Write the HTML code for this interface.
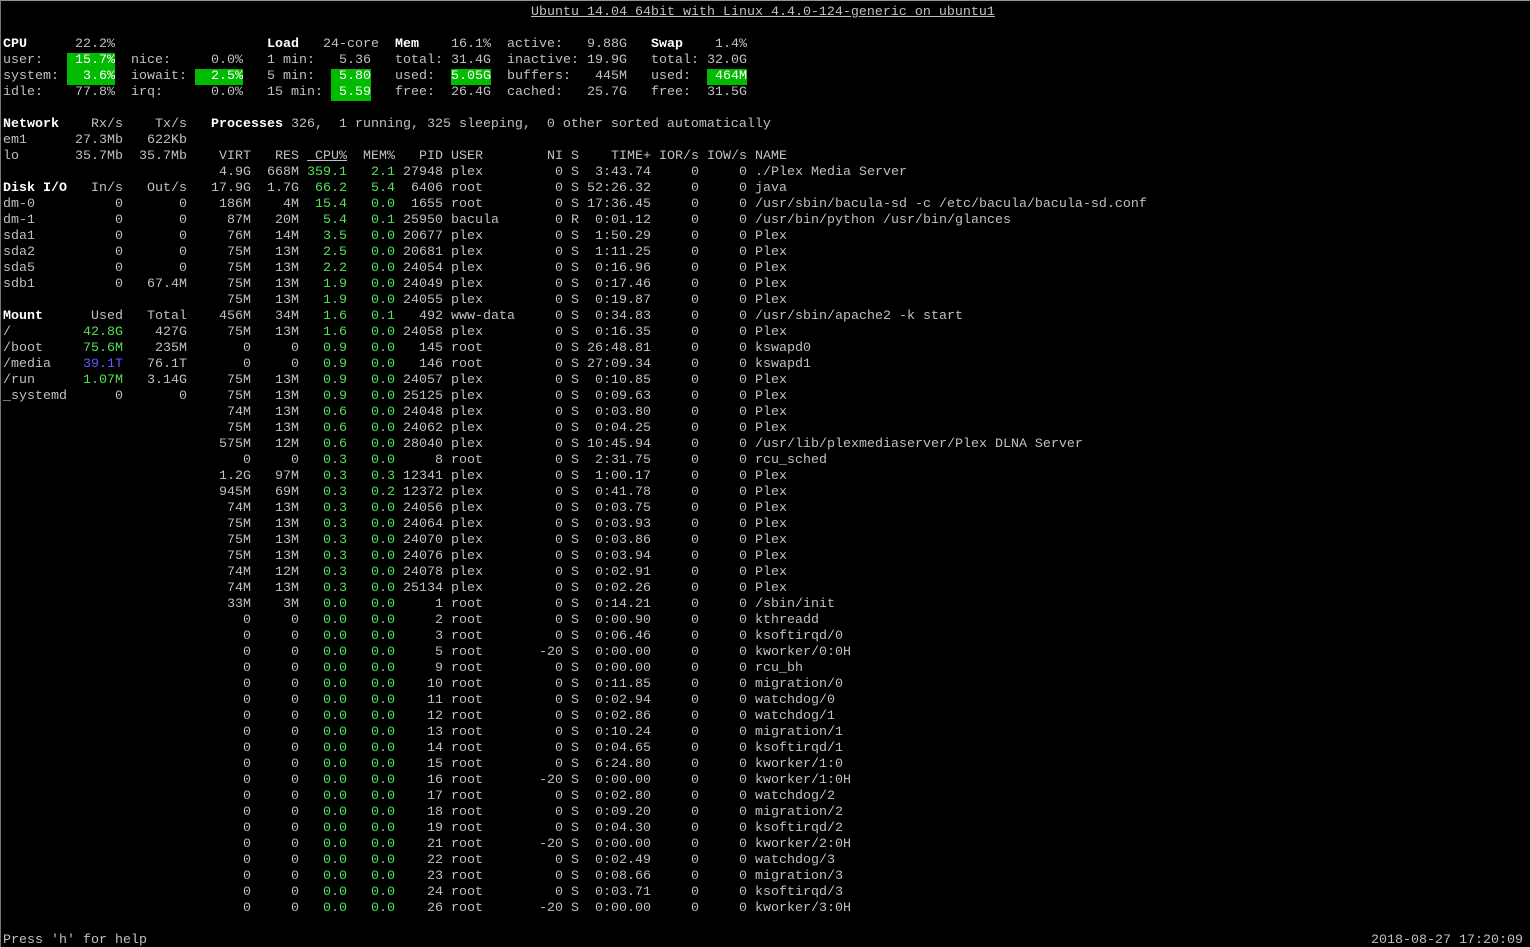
<!DOCTYPE html>
<html><head><meta charset="utf-8"><style>
html,body{margin:0;padding:0;background:#000;width:1530px;height:947px;overflow:hidden;}
body{position:relative;border-top:1px solid #8a93a3;border-left:1px solid #777;box-sizing:border-box;}
#t{position:absolute;left:2px;top:4px;width:1520px;height:940px;font-family:"Liberation Mono",monospace;font-size:13.333px;line-height:16px;color:#c0c0c0;white-space:nowrap;}
#t span{white-space:pre;}
.a{position:absolute;}
.b{color:#fff;font-weight:bold;}
.h{background:#00bb00;color:#fff;}
.g{color:#55e055;}
.u{color:#5c5cff;}
.ul{text-decoration:underline;}
.row{position:absolute;left:208px;height:16px;}
.row span{display:inline-block;vertical-align:top;}
.v1{width:40px;text-align:right}
.v2,.v3,.v4,.v5,.v11,.v12{width:48px;text-align:right}
.v3,.v4{color:#55e055}
.v6{width:88px;margin-left:8px;text-align:left}
.v7{width:24px;text-align:right}
.v8{width:8px;margin-left:8px}
.v9{width:72px;text-align:right}
.v13{margin-left:8px}
.lrow{position:absolute;left:0;height:16px;}
.lrow span{display:inline-block;vertical-align:top;}
.l1{width:72px}
.l2{width:48px;text-align:right}
.l3{width:64px;text-align:right}
</style></head><body><div id="t"><span class="a ul" style="left:528px;top:0">Ubuntu 14.04 64bit with Linux 4.4.0-124-generic on ubuntu1</span><span class="a b" style="left:0;top:32px">CPU</span><span class="a" style="left:72px;top:32px">22.2%</span><span class="a b" style="left:264px;top:32px">Load</span><span class="a" style="left:320px;top:32px">24-core</span><span class="a b" style="left:392px;top:32px">Mem</span><span class="a" style="left:448px;top:32px">16.1%</span><span class="a" style="left:504px;top:32px">active:</span><span class="a" style="left:584px;top:32px">9.88G</span><span class="a b" style="left:648px;top:32px">Swap</span><span class="a" style="left:712px;top:32px">1.4%</span>
<span class="a" style="left:0;top:48px">user:</span><span class="a h" style="left:64px;top:48px"> 15.7%</span><span class="a" style="left:128px;top:48px">nice:</span><span class="a" style="left:208px;top:48px">0.0%</span><span class="a" style="left:264px;top:48px">1 min:</span><span class="a" style="left:336px;top:48px">5.36</span><span class="a" style="left:392px;top:48px">total:</span><span class="a" style="left:448px;top:48px">31.4G</span><span class="a" style="left:504px;top:48px">inactive:</span><span class="a" style="left:584px;top:48px">19.9G</span><span class="a" style="left:648px;top:48px">total:</span><span class="a" style="left:704px;top:48px">32.0G</span>
<span class="a" style="left:0;top:64px">system:</span><span class="a h" style="left:64px;top:64px">  3.6%</span><span class="a" style="left:128px;top:64px">iowait:</span><span class="a h" style="left:192px;top:64px">  2.5%</span><span class="a" style="left:264px;top:64px">5 min:</span><span class="a h" style="left:328px;top:64px"> 5.80</span><span class="a" style="left:392px;top:64px">used:</span><span class="a h" style="left:448px;top:64px">5.05G</span><span class="a" style="left:504px;top:64px">buffers:</span><span class="a" style="left:592px;top:64px">445M</span><span class="a" style="left:648px;top:64px">used:</span><span class="a h" style="left:704px;top:64px"> 464M</span>
<span class="a" style="left:0;top:80px">idle:</span><span class="a" style="left:72px;top:80px">77.8%</span><span class="a" style="left:128px;top:80px">irq:</span><span class="a" style="left:208px;top:80px">0.0%</span><span class="a" style="left:264px;top:80px">15 min:</span><span class="a h" style="left:328px;top:80px"> 5.59</span><span class="a" style="left:392px;top:80px">free:</span><span class="a" style="left:448px;top:80px">26.4G</span><span class="a" style="left:504px;top:80px">cached:</span><span class="a" style="left:584px;top:80px">25.7G</span><span class="a" style="left:648px;top:80px">free:</span><span class="a" style="left:704px;top:80px">31.5G</span>
<span class="lrow" style="top:112px"><span class="l1 b">Network</span><span class="l2">Rx/s</span><span class="l3">Tx/s</span></span><span class="a" style="left:208px;top:112px"><span class="b">Processes</span> 326,  1 running, 325 sleeping,  0 other sorted automatically</span>
<span class="lrow" style="top:128px"><span class="l1">em1</span><span class="l2">27.3Mb</span><span class="l3">622Kb</span></span>
<span class="lrow" style="top:144px"><span class="l1">lo</span><span class="l2">35.7Mb</span><span class="l3">35.7Mb</span></span>
<span class="lrow" style="top:176px"><span class="l1 b">Disk I/O</span><span class="l2">In/s</span><span class="l3">Out/s</span></span>
<span class="lrow" style="top:192px"><span class="l1">dm-0</span><span class="l2">0</span><span class="l3">0</span></span>
<span class="lrow" style="top:208px"><span class="l1">dm-1</span><span class="l2">0</span><span class="l3">0</span></span>
<span class="lrow" style="top:224px"><span class="l1">sda1</span><span class="l2">0</span><span class="l3">0</span></span>
<span class="lrow" style="top:240px"><span class="l1">sda2</span><span class="l2">0</span><span class="l3">0</span></span>
<span class="lrow" style="top:256px"><span class="l1">sda5</span><span class="l2">0</span><span class="l3">0</span></span>
<span class="lrow" style="top:272px"><span class="l1">sdb1</span><span class="l2">0</span><span class="l3">67.4M</span></span>
<span class="lrow" style="top:304px"><span class="l1 b">Mount</span><span class="l2">Used</span><span class="l3">Total</span></span>
<span class="lrow" style="top:320px"><span class="l1">/</span><span class="l2 g">42.8G</span><span class="l3">427G</span></span>
<span class="lrow" style="top:336px"><span class="l1">/boot</span><span class="l2 g">75.6M</span><span class="l3">235M</span></span>
<span class="lrow" style="top:352px"><span class="l1">/media</span><span class="l2 u">39.1T</span><span class="l3">76.1T</span></span>
<span class="lrow" style="top:368px"><span class="l1">/run</span><span class="l2 g">1.07M</span><span class="l3">3.14G</span></span>
<span class="lrow" style="top:384px"><span class="l1">_systemd</span><span class="l2">0</span><span class="l3">0</span></span>
<span class="row" style="top:144px"><span class="v1">VIRT</span><span class="v2">RES</span><span class="v2"><span class="ul"> CPU%</span></span><span class="v2">MEM%</span><span class="v5">PID</span><span class="v6">USER</span><span class="v7">NI</span><span class="v8">S</span><span class="v9">TIME+</span><span class="v11">IOR/s</span><span class="v12">IOW/s</span><span class="v13">NAME</span></span>
<span class="row" style="top:160px"><span class="v1">4.9G</span><span class="v2">668M</span><span class="v3">359.1</span><span class="v4">2.1</span><span class="v5">27948</span><span class="v6">plex</span><span class="v7">0</span><span class="v8">S</span><span class="v9">3:43.74</span><span class="v11">0</span><span class="v12">0</span><span class="v13">./Plex Media Server</span></span>
<span class="row" style="top:176px"><span class="v1">17.9G</span><span class="v2">1.7G</span><span class="v3">66.2</span><span class="v4">5.4</span><span class="v5">6406</span><span class="v6">root</span><span class="v7">0</span><span class="v8">S</span><span class="v9">52:26.32</span><span class="v11">0</span><span class="v12">0</span><span class="v13">java</span></span>
<span class="row" style="top:192px"><span class="v1">186M</span><span class="v2">4M</span><span class="v3">15.4</span><span class="v4">0.0</span><span class="v5">1655</span><span class="v6">root</span><span class="v7">0</span><span class="v8">S</span><span class="v9">17:36.45</span><span class="v11">0</span><span class="v12">0</span><span class="v13">/usr/sbin/bacula-sd -c /etc/bacula/bacula-sd.conf</span></span>
<span class="row" style="top:208px"><span class="v1">87M</span><span class="v2">20M</span><span class="v3">5.4</span><span class="v4">0.1</span><span class="v5">25950</span><span class="v6">bacula</span><span class="v7">0</span><span class="v8">R</span><span class="v9">0:01.12</span><span class="v11">0</span><span class="v12">0</span><span class="v13">/usr/bin/python /usr/bin/glances</span></span>
<span class="row" style="top:224px"><span class="v1">76M</span><span class="v2">14M</span><span class="v3">3.5</span><span class="v4">0.0</span><span class="v5">20677</span><span class="v6">plex</span><span class="v7">0</span><span class="v8">S</span><span class="v9">1:50.29</span><span class="v11">0</span><span class="v12">0</span><span class="v13">Plex</span></span>
<span class="row" style="top:240px"><span class="v1">75M</span><span class="v2">13M</span><span class="v3">2.5</span><span class="v4">0.0</span><span class="v5">20681</span><span class="v6">plex</span><span class="v7">0</span><span class="v8">S</span><span class="v9">1:11.25</span><span class="v11">0</span><span class="v12">0</span><span class="v13">Plex</span></span>
<span class="row" style="top:256px"><span class="v1">75M</span><span class="v2">13M</span><span class="v3">2.2</span><span class="v4">0.0</span><span class="v5">24054</span><span class="v6">plex</span><span class="v7">0</span><span class="v8">S</span><span class="v9">0:16.96</span><span class="v11">0</span><span class="v12">0</span><span class="v13">Plex</span></span>
<span class="row" style="top:272px"><span class="v1">75M</span><span class="v2">13M</span><span class="v3">1.9</span><span class="v4">0.0</span><span class="v5">24049</span><span class="v6">plex</span><span class="v7">0</span><span class="v8">S</span><span class="v9">0:17.46</span><span class="v11">0</span><span class="v12">0</span><span class="v13">Plex</span></span>
<span class="row" style="top:288px"><span class="v1">75M</span><span class="v2">13M</span><span class="v3">1.9</span><span class="v4">0.0</span><span class="v5">24055</span><span class="v6">plex</span><span class="v7">0</span><span class="v8">S</span><span class="v9">0:19.87</span><span class="v11">0</span><span class="v12">0</span><span class="v13">Plex</span></span>
<span class="row" style="top:304px"><span class="v1">456M</span><span class="v2">34M</span><span class="v3">1.6</span><span class="v4">0.1</span><span class="v5">492</span><span class="v6">www-data</span><span class="v7">0</span><span class="v8">S</span><span class="v9">0:34.83</span><span class="v11">0</span><span class="v12">0</span><span class="v13">/usr/sbin/apache2 -k start</span></span>
<span class="row" style="top:320px"><span class="v1">75M</span><span class="v2">13M</span><span class="v3">1.6</span><span class="v4">0.0</span><span class="v5">24058</span><span class="v6">plex</span><span class="v7">0</span><span class="v8">S</span><span class="v9">0:16.35</span><span class="v11">0</span><span class="v12">0</span><span class="v13">Plex</span></span>
<span class="row" style="top:336px"><span class="v1">0</span><span class="v2">0</span><span class="v3">0.9</span><span class="v4">0.0</span><span class="v5">145</span><span class="v6">root</span><span class="v7">0</span><span class="v8">S</span><span class="v9">26:48.81</span><span class="v11">0</span><span class="v12">0</span><span class="v13">kswapd0</span></span>
<span class="row" style="top:352px"><span class="v1">0</span><span class="v2">0</span><span class="v3">0.9</span><span class="v4">0.0</span><span class="v5">146</span><span class="v6">root</span><span class="v7">0</span><span class="v8">S</span><span class="v9">27:09.34</span><span class="v11">0</span><span class="v12">0</span><span class="v13">kswapd1</span></span>
<span class="row" style="top:368px"><span class="v1">75M</span><span class="v2">13M</span><span class="v3">0.9</span><span class="v4">0.0</span><span class="v5">24057</span><span class="v6">plex</span><span class="v7">0</span><span class="v8">S</span><span class="v9">0:10.85</span><span class="v11">0</span><span class="v12">0</span><span class="v13">Plex</span></span>
<span class="row" style="top:384px"><span class="v1">75M</span><span class="v2">13M</span><span class="v3">0.9</span><span class="v4">0.0</span><span class="v5">25125</span><span class="v6">plex</span><span class="v7">0</span><span class="v8">S</span><span class="v9">0:09.63</span><span class="v11">0</span><span class="v12">0</span><span class="v13">Plex</span></span>
<span class="row" style="top:400px"><span class="v1">74M</span><span class="v2">13M</span><span class="v3">0.6</span><span class="v4">0.0</span><span class="v5">24048</span><span class="v6">plex</span><span class="v7">0</span><span class="v8">S</span><span class="v9">0:03.80</span><span class="v11">0</span><span class="v12">0</span><span class="v13">Plex</span></span>
<span class="row" style="top:416px"><span class="v1">75M</span><span class="v2">13M</span><span class="v3">0.6</span><span class="v4">0.0</span><span class="v5">24062</span><span class="v6">plex</span><span class="v7">0</span><span class="v8">S</span><span class="v9">0:04.25</span><span class="v11">0</span><span class="v12">0</span><span class="v13">Plex</span></span>
<span class="row" style="top:432px"><span class="v1">575M</span><span class="v2">12M</span><span class="v3">0.6</span><span class="v4">0.0</span><span class="v5">28040</span><span class="v6">plex</span><span class="v7">0</span><span class="v8">S</span><span class="v9">10:45.94</span><span class="v11">0</span><span class="v12">0</span><span class="v13">/usr/lib/plexmediaserver/Plex DLNA Server</span></span>
<span class="row" style="top:448px"><span class="v1">0</span><span class="v2">0</span><span class="v3">0.3</span><span class="v4">0.0</span><span class="v5">8</span><span class="v6">root</span><span class="v7">0</span><span class="v8">S</span><span class="v9">2:31.75</span><span class="v11">0</span><span class="v12">0</span><span class="v13">rcu_sched</span></span>
<span class="row" style="top:464px"><span class="v1">1.2G</span><span class="v2">97M</span><span class="v3">0.3</span><span class="v4">0.3</span><span class="v5">12341</span><span class="v6">plex</span><span class="v7">0</span><span class="v8">S</span><span class="v9">1:00.17</span><span class="v11">0</span><span class="v12">0</span><span class="v13">Plex</span></span>
<span class="row" style="top:480px"><span class="v1">945M</span><span class="v2">69M</span><span class="v3">0.3</span><span class="v4">0.2</span><span class="v5">12372</span><span class="v6">plex</span><span class="v7">0</span><span class="v8">S</span><span class="v9">0:41.78</span><span class="v11">0</span><span class="v12">0</span><span class="v13">Plex</span></span>
<span class="row" style="top:496px"><span class="v1">74M</span><span class="v2">13M</span><span class="v3">0.3</span><span class="v4">0.0</span><span class="v5">24056</span><span class="v6">plex</span><span class="v7">0</span><span class="v8">S</span><span class="v9">0:03.75</span><span class="v11">0</span><span class="v12">0</span><span class="v13">Plex</span></span>
<span class="row" style="top:512px"><span class="v1">75M</span><span class="v2">13M</span><span class="v3">0.3</span><span class="v4">0.0</span><span class="v5">24064</span><span class="v6">plex</span><span class="v7">0</span><span class="v8">S</span><span class="v9">0:03.93</span><span class="v11">0</span><span class="v12">0</span><span class="v13">Plex</span></span>
<span class="row" style="top:528px"><span class="v1">75M</span><span class="v2">13M</span><span class="v3">0.3</span><span class="v4">0.0</span><span class="v5">24070</span><span class="v6">plex</span><span class="v7">0</span><span class="v8">S</span><span class="v9">0:03.86</span><span class="v11">0</span><span class="v12">0</span><span class="v13">Plex</span></span>
<span class="row" style="top:544px"><span class="v1">75M</span><span class="v2">13M</span><span class="v3">0.3</span><span class="v4">0.0</span><span class="v5">24076</span><span class="v6">plex</span><span class="v7">0</span><span class="v8">S</span><span class="v9">0:03.94</span><span class="v11">0</span><span class="v12">0</span><span class="v13">Plex</span></span>
<span class="row" style="top:560px"><span class="v1">74M</span><span class="v2">12M</span><span class="v3">0.3</span><span class="v4">0.0</span><span class="v5">24078</span><span class="v6">plex</span><span class="v7">0</span><span class="v8">S</span><span class="v9">0:02.91</span><span class="v11">0</span><span class="v12">0</span><span class="v13">Plex</span></span>
<span class="row" style="top:576px"><span class="v1">74M</span><span class="v2">13M</span><span class="v3">0.3</span><span class="v4">0.0</span><span class="v5">25134</span><span class="v6">plex</span><span class="v7">0</span><span class="v8">S</span><span class="v9">0:02.26</span><span class="v11">0</span><span class="v12">0</span><span class="v13">Plex</span></span>
<span class="row" style="top:592px"><span class="v1">33M</span><span class="v2">3M</span><span class="v3">0.0</span><span class="v4">0.0</span><span class="v5">1</span><span class="v6">root</span><span class="v7">0</span><span class="v8">S</span><span class="v9">0:14.21</span><span class="v11">0</span><span class="v12">0</span><span class="v13">/sbin/init</span></span>
<span class="row" style="top:608px"><span class="v1">0</span><span class="v2">0</span><span class="v3">0.0</span><span class="v4">0.0</span><span class="v5">2</span><span class="v6">root</span><span class="v7">0</span><span class="v8">S</span><span class="v9">0:00.90</span><span class="v11">0</span><span class="v12">0</span><span class="v13">kthreadd</span></span>
<span class="row" style="top:624px"><span class="v1">0</span><span class="v2">0</span><span class="v3">0.0</span><span class="v4">0.0</span><span class="v5">3</span><span class="v6">root</span><span class="v7">0</span><span class="v8">S</span><span class="v9">0:06.46</span><span class="v11">0</span><span class="v12">0</span><span class="v13">ksoftirqd/0</span></span>
<span class="row" style="top:640px"><span class="v1">0</span><span class="v2">0</span><span class="v3">0.0</span><span class="v4">0.0</span><span class="v5">5</span><span class="v6">root</span><span class="v7">-20</span><span class="v8">S</span><span class="v9">0:00.00</span><span class="v11">0</span><span class="v12">0</span><span class="v13">kworker/0:0H</span></span>
<span class="row" style="top:656px"><span class="v1">0</span><span class="v2">0</span><span class="v3">0.0</span><span class="v4">0.0</span><span class="v5">9</span><span class="v6">root</span><span class="v7">0</span><span class="v8">S</span><span class="v9">0:00.00</span><span class="v11">0</span><span class="v12">0</span><span class="v13">rcu_bh</span></span>
<span class="row" style="top:672px"><span class="v1">0</span><span class="v2">0</span><span class="v3">0.0</span><span class="v4">0.0</span><span class="v5">10</span><span class="v6">root</span><span class="v7">0</span><span class="v8">S</span><span class="v9">0:11.85</span><span class="v11">0</span><span class="v12">0</span><span class="v13">migration/0</span></span>
<span class="row" style="top:688px"><span class="v1">0</span><span class="v2">0</span><span class="v3">0.0</span><span class="v4">0.0</span><span class="v5">11</span><span class="v6">root</span><span class="v7">0</span><span class="v8">S</span><span class="v9">0:02.94</span><span class="v11">0</span><span class="v12">0</span><span class="v13">watchdog/0</span></span>
<span class="row" style="top:704px"><span class="v1">0</span><span class="v2">0</span><span class="v3">0.0</span><span class="v4">0.0</span><span class="v5">12</span><span class="v6">root</span><span class="v7">0</span><span class="v8">S</span><span class="v9">0:02.86</span><span class="v11">0</span><span class="v12">0</span><span class="v13">watchdog/1</span></span>
<span class="row" style="top:720px"><span class="v1">0</span><span class="v2">0</span><span class="v3">0.0</span><span class="v4">0.0</span><span class="v5">13</span><span class="v6">root</span><span class="v7">0</span><span class="v8">S</span><span class="v9">0:10.24</span><span class="v11">0</span><span class="v12">0</span><span class="v13">migration/1</span></span>
<span class="row" style="top:736px"><span class="v1">0</span><span class="v2">0</span><span class="v3">0.0</span><span class="v4">0.0</span><span class="v5">14</span><span class="v6">root</span><span class="v7">0</span><span class="v8">S</span><span class="v9">0:04.65</span><span class="v11">0</span><span class="v12">0</span><span class="v13">ksoftirqd/1</span></span>
<span class="row" style="top:752px"><span class="v1">0</span><span class="v2">0</span><span class="v3">0.0</span><span class="v4">0.0</span><span class="v5">15</span><span class="v6">root</span><span class="v7">0</span><span class="v8">S</span><span class="v9">6:24.80</span><span class="v11">0</span><span class="v12">0</span><span class="v13">kworker/1:0</span></span>
<span class="row" style="top:768px"><span class="v1">0</span><span class="v2">0</span><span class="v3">0.0</span><span class="v4">0.0</span><span class="v5">16</span><span class="v6">root</span><span class="v7">-20</span><span class="v8">S</span><span class="v9">0:00.00</span><span class="v11">0</span><span class="v12">0</span><span class="v13">kworker/1:0H</span></span>
<span class="row" style="top:784px"><span class="v1">0</span><span class="v2">0</span><span class="v3">0.0</span><span class="v4">0.0</span><span class="v5">17</span><span class="v6">root</span><span class="v7">0</span><span class="v8">S</span><span class="v9">0:02.80</span><span class="v11">0</span><span class="v12">0</span><span class="v13">watchdog/2</span></span>
<span class="row" style="top:800px"><span class="v1">0</span><span class="v2">0</span><span class="v3">0.0</span><span class="v4">0.0</span><span class="v5">18</span><span class="v6">root</span><span class="v7">0</span><span class="v8">S</span><span class="v9">0:09.20</span><span class="v11">0</span><span class="v12">0</span><span class="v13">migration/2</span></span>
<span class="row" style="top:816px"><span class="v1">0</span><span class="v2">0</span><span class="v3">0.0</span><span class="v4">0.0</span><span class="v5">19</span><span class="v6">root</span><span class="v7">0</span><span class="v8">S</span><span class="v9">0:04.30</span><span class="v11">0</span><span class="v12">0</span><span class="v13">ksoftirqd/2</span></span>
<span class="row" style="top:832px"><span class="v1">0</span><span class="v2">0</span><span class="v3">0.0</span><span class="v4">0.0</span><span class="v5">21</span><span class="v6">root</span><span class="v7">-20</span><span class="v8">S</span><span class="v9">0:00.00</span><span class="v11">0</span><span class="v12">0</span><span class="v13">kworker/2:0H</span></span>
<span class="row" style="top:848px"><span class="v1">0</span><span class="v2">0</span><span class="v3">0.0</span><span class="v4">0.0</span><span class="v5">22</span><span class="v6">root</span><span class="v7">0</span><span class="v8">S</span><span class="v9">0:02.49</span><span class="v11">0</span><span class="v12">0</span><span class="v13">watchdog/3</span></span>
<span class="row" style="top:864px"><span class="v1">0</span><span class="v2">0</span><span class="v3">0.0</span><span class="v4">0.0</span><span class="v5">23</span><span class="v6">root</span><span class="v7">0</span><span class="v8">S</span><span class="v9">0:08.66</span><span class="v11">0</span><span class="v12">0</span><span class="v13">migration/3</span></span>
<span class="row" style="top:880px"><span class="v1">0</span><span class="v2">0</span><span class="v3">0.0</span><span class="v4">0.0</span><span class="v5">24</span><span class="v6">root</span><span class="v7">0</span><span class="v8">S</span><span class="v9">0:03.71</span><span class="v11">0</span><span class="v12">0</span><span class="v13">ksoftirqd/3</span></span>
<span class="row" style="top:896px"><span class="v1">0</span><span class="v2">0</span><span class="v3">0.0</span><span class="v4">0.0</span><span class="v5">26</span><span class="v6">root</span><span class="v7">-20</span><span class="v8">S</span><span class="v9">0:00.00</span><span class="v11">0</span><span class="v12">0</span><span class="v13">kworker/3:0H</span></span>
<span class="a" style="left:0;top:928px">Press 'h' for help</span><span class="a" style="left:1368px;top:928px">2018-08-27 17:20:09</span></div></body></html>
